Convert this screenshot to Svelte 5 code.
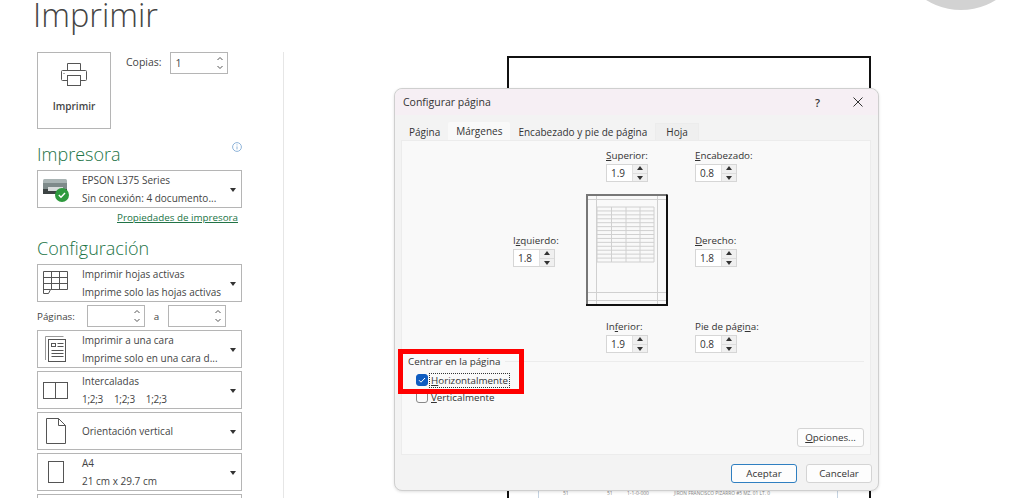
<script>
  const tableRows = Array.from({ length: 15 }, (_, i) => 208 + i * 55 / 14);
  const tableCols = [598, 612.5, 627, 641, 655];
</script>

{#snippet chevrons()}
  <svg class="arrows" width="8" height="16" viewBox="0 0 8 16" fill="none" stroke="#555"><path d="M1.500 5L4 2.500 6.500 5M1.500 11L4 13.500 6.500 11" /></svg>
{/snippet}

{#snippet updown()}
  <i class="updown"><b class="up"></b><b class="down"></b></i>
{/snippet}

<div class="screen">
  <div class="circle"></div>

  <div class="preview">
    <div class="tiny">
      <span class="t1">51</span><span class="t2">51</span><span class="t3">1-1-0-000</span><span class="t4">JIRON FRANCISCO PIZARRO #5 MZ. 01 LT. 0</span>
    </div>
  </div>

  <h1>Imprimir</h1>

  <div class="panel">
    <div class="print-row">
      <button class="print-btn">
        <svg width="28" height="27" viewBox="0 0 28 27" fill="none" stroke="#555" stroke-width="1">
          <path d="M7.5 9.500v-7h13v7" />
          <path d="M7.5 19.500h-5a1 1 0 0 1-1-1v-8a1 1 0 0 1 1-1h23a1 1 0 0 1 1 1v8a1 1 0 0 1-1 1h-5" />
          <rect x="7.5" y="14.500" width="13" height="10" />
          <path d="M3.500 12.500h1" />
        </svg>
        <span>Imprimir</span>
      </button>
      <span class="copies-label">Copias:</span>
      <div class="spin copies"><span>1</span>{@render chevrons()}</div>
    </div>

    <div class="head printer-head">
      <h2>Impresora</h2>
      <svg class="info" width="10" height="10" viewBox="0 0 10 10" fill="none" stroke="#8fb4d9"><circle cx="5" cy="5" r="4.400" /><path d="M5 4.400v3M5 2.400v1" /></svg>
    </div>

    <div class="drop">
      <div class="ico">
        <svg width="28" height="28" viewBox="0 0 28 28">
          <rect x="1" y="4" width="24" height="5" rx="1.500" fill="#a9b4b4" />
          <rect x="1" y="8" width="24" height="6" fill="#7e8a8a" />
          <rect x="1" y="14" width="24" height="5" fill="#3d4343" />
          <rect x="6" y="12" width="15" height="4" fill="#d8dcdc" />
          <circle cx="20" cy="20" r="7" fill="#2e9a3e" />
          <path d="M16.800 20l2.200 2.300 4-4.300" fill="none" stroke="#fff" stroke-width="1.400" />
        </svg>
      </div>
      <div class="txt"><div>EPSON L375 Series</div><div>Sin conexión: 4 documento...</div></div>
      <i class="caret"></i>
    </div>
    <a class="props">Propiedades de impresora</a>

    <div class="head config-head"><h2>Configuración</h2></div>

    <div class="drop">
      <div class="ico">
        <svg width="26" height="24" viewBox="0 0 26 24" fill="none" stroke="#555">
          <path d="M.5 .5h24v18h-17l-2 4h-5z" />
          <path d="M.5 6.500h24M.5 12.500h24M.5 18.500h7M8.500 .5v18M16.500 .5v18" />
        </svg>
      </div>
      <div class="txt"><div>Imprimir hojas activas</div><div>Imprime solo las hojas activas</div></div>
      <i class="caret"></i>
    </div>

    <div class="pages">
      <span>Páginas:</span>
      <div class="spin pg">{@render chevrons()}</div>
      <span class="a">a</span>
      <div class="spin pg">{@render chevrons()}</div>
    </div>

    <div class="drop">
      <div class="ico">
        <svg width="22" height="27" viewBox="0 0 22 27" fill="none" stroke="#555">
          <path d="M.5 24V.5h18" stroke="#999" />
          <rect x="3.500" y="3.500" width="17" height="22" />
          <rect x="6.500" y="7.500" width="4" height="3" />
          <path d="M12.500 7.500h6M12.500 10.500h6M6.500 14.500h12M6.500 17.500h12M6.500 20.500h12" />
        </svg>
      </div>
      <div class="txt"><div>Imprimir a una cara</div><div>Imprime solo en una cara d...</div></div>
      <i class="caret"></i>
    </div>

    <div class="drop">
      <div class="ico">
        <svg width="26" height="17" viewBox="0 0 26 17" fill="none" stroke="#555">
          <rect x=".5" y=".5" width="12" height="16" /><rect x="12.500" y=".5" width="12" height="16" />
        </svg>
      </div>
      <div class="txt"><div>Intercaladas</div><div class="coll"><span>1;2;3</span><span>1;2;3</span><span>1;2;3</span></div></div>
      <i class="caret"></i>
    </div>

    <div class="drop">
      <div class="ico">
        <svg width="20" height="26" viewBox="0 0 20 26" fill="none" stroke="#555">
          <path d="M.5 .5h12l7 7v18h-19zM12.500 .5v7h7" />
        </svg>
      </div>
      <div class="txt single"><div>Orientación vertical</div></div>
      <i class="caret"></i>
    </div>

    <div class="drop">
      <div class="ico">
        <svg width="16" height="22" viewBox="0 0 16 22" fill="none" stroke="#555"><rect x=".5" y=".5" width="15" height="21" /></svg>
      </div>
      <div class="txt"><div>A4</div><div>21 cm x 29.7 cm</div></div>
      <i class="caret"></i>
    </div>

    <div class="drop"></div>
  </div>

  <div class="dialog">
    <div class="titlebar">
      <span class="dlg-title">Configurar página</span>
      <span class="help">?</span>
      <svg class="close" width="10" height="10" viewBox="0 0 10 10" stroke="#333" fill="none"><path d="M.5 .5l9 9M9.500 .5l-9 9" /></svg>
    </div>

    <div class="tabs">
      <span class="tab">Página</span>
      <span class="tab active">Márgenes</span>
      <span class="tab">Encabezado y pie de página</span>
      <span class="tab hoja">Hoja</span>
    </div>

    <div class="pane">
      <div class="row top-row">
        <div class="field"><label><u>S</u>uperior:</label><div class="num"><span>1.9</span>{@render updown()}</div></div>
        <div class="field"><label><u>E</u>ncabezado:</label><div class="num"><span>0.8</span>{@render updown()}</div></div>
      </div>

      <div class="row mid-row">
        <div class="field side"><label>I<u>z</u>quierdo:</label><div class="num"><span>1.8</span>{@render updown()}</div></div>
        <svg class="sheet" width="82" height="112" viewBox="587 195 82 112" fill="none">
          <g stroke="#d0d0d0">
            <path d="M597.5 195v112M658.5 195v112M587 200.500h82M587 293.500h82M587 301.500h82" />
            {#each tableRows as y}<path d="M598 {y}H655" />{/each}
            {#each tableCols as x}<path d="M{x} 208V263" />{/each}
          </g>
          <path d="M588 306V196h80" stroke="#777" stroke-width="2" />
          <path d="M668 195.500V306H587" stroke="#111" stroke-width="2" />
        </svg>
        <div class="field side right"><label><u>D</u>erecho:</label><div class="num"><span>1.8</span>{@render updown()}</div></div>
      </div>

      <div class="row bot-row">
        <div class="field"><label>In<u>f</u>erior:</label><div class="num"><span>1.9</span>{@render updown()}</div></div>
        <div class="field"><label>Pie de pági<u>n</u>a:</label><div class="num"><span>0.8</span>{@render updown()}</div></div>
      </div>

      <div class="group">
        <span class="legend">Centrar en la página</span>
        <span class="sep"></span>
      </div>
      <div class="checks">
        <div class="check on">
          <span class="box"><svg width="12" height="12" viewBox="0 0 12 12" fill="none" stroke="#fff"><path d="M3 6.200l2 2 4-4.200" /></svg></span>
          <span class="focus"><u>H</u>orizontalmente</span>
        </div>
        <div class="check">
          <span class="box"></span>
          <span class="plain"><u>V</u>erticalmente</span>
        </div>
      </div>
      <div class="opts"><button class="btn opciones"><u>O</u>pciones...</button></div>
    </div>

    <div class="footer">
      <button class="btn primary">Aceptar</button>
      <button class="btn">Cancelar</button>
    </div>

    <div class="redbox"></div>
  </div>
</div>

<style>
  :global(body) { margin: 0; background: #fff; }
  * { box-sizing: border-box; }
  .screen {
    position: relative;
    width: 1024px;
    height: 498px;
    overflow: hidden;
    background: #fff;
    font-family: "Open Sans", "Noto Sans", sans-serif;
    color: #444;
  }
  .circle {
    position: absolute;
    left: 895px;
    top: -122px;
    width: 132px;
    height: 132px;
    border-radius: 50%;
    background: #d2d2d2;
  }
  .preview {
    position: absolute;
    left: 507px;
    top: 56px;
    width: 364px;
    height: 460px;
    border: 2px solid #111;
    background: #fff;
  }
  .tiny {
    position: absolute;
    left: 29px;
    right: 31px;
    top: 380px;
    height: 80px;
    border-left: 1px solid #c6d4e2;
    border-right: 1px solid #c6d4e2;
    font-size: 5px;
    color: #888;
  }
  .tiny span { position: absolute; top: 52px; white-space: nowrap; }
  .t1 { left: 24px; }
  .t2 { left: 68px; }
  .t3 { left: 88px; }
  .t4 { left: 135px; font-size: 4.800px; }

  h1 {
    margin: 0 0 0 33px;
    height: 52px;
    font-size: 32.500px;
    line-height: 30px;
    font-weight: 300;
    color: #444;
  }
  .panel {
    margin-left: 37px;
    width: 247px;
    height: 446px;
    border-right: 1px solid #e6e6e6;
    display: flex;
    flex-direction: column;
    gap: 3px;
  }
  .print-row { display: flex; align-items: flex-start; height: 77px; flex: none; }
  .print-btn {
    width: 74px;
    height: 77px;
    border: 1px solid #b5b5b5;
    background: #fff;
    padding: 8px 0 0;
    display: flex;
    flex-direction: column;
    align-items: center;
    font-family: inherit;
    font-size: 10px;
    font-weight: 600;
    color: #444;
  }
  .print-btn span { margin-top: 11px; }
  .copies-label { margin: 3px 8px 0 15px; font-size: 10.500px; line-height: 15px; }
  .spin {
    position: relative;
    height: 22px;
    border: 1px solid #b5b5b5;
    font-size: 10.500px;
    line-height: 20px;
    padding-left: 5px;
    background: #fff;
  }
  .copies { width: 58px; }
  .arrows { position: absolute; right: 3px; top: 2px; }

  .head { display: flex; justify-content: space-between; width: 205px; flex: none; }
  .printer-head { margin-top: 10px; height: 25px; }
  .config-head { margin-top: 8px; height: 25px; }
  h2 {
    margin: 0;
    font-size: 18px;
    line-height: 24px;
    font-weight: 300;
    color: #217346;
  }
  .info { margin: 0; }

  .drop {
    width: 205px;
    height: 38px;
    flex: none;
    border: 1px solid #b5b5b5;
    display: flex;
    align-items: center;
    background: #fff;
    position: relative;
  }
  .ico { width: 44px; flex: none; display: flex; justify-content: center; align-items: center; padding-right: 10px; padding-left: 2px; }
  .txt { font-size: 10px; line-height: 18px; white-space: nowrap; color: #444; }
  .coll { display: flex; gap: 11px; letter-spacing: -0.3px; }
  .caret {
    position: absolute;
    right: 5px;
    top: 17px;
    border: 3.500px solid transparent;
    border-top: 4px solid #333;
    border-bottom: 0;
  }
  .props {
    align-self: flex-start;
    width: 201px;
    margin-top: -1px;
    height: 15px;
    flex: none;
    text-align: right;
    font-size: 9.800px;
    line-height: 15px;
    color: #217346;
    text-decoration: underline;
    white-space: nowrap;
  }
  .pages {
    display: flex;
    align-items: center;
    width: 205px;
    height: 22px;
    flex: none;
    font-size: 9.800px;
  }
  .pages > span:first-child { width: 50px; }
  .pg { width: 58px; }
  .a { width: 23px; text-align: center; }

  /* dialog */
  .dialog {
    position: absolute;
    left: 394px;
    top: 88px;
    width: 485px;
    height: 403px;
    border: 1px solid #cfcfcf;
    border-radius: 8px;
    background: #f3f3f3;
    box-shadow: 0 1px 3px rgba(0,0,0,.12);
    font-size: 9.800px;
    color: #333;
    display: flex;
    flex-direction: column;
  }
  .titlebar {
    height: 26px;
    flex: none;
    background: #f6eff4;
    border-radius: 8px 8px 0 0;
    display: flex;
    align-items: center;
    padding: 0 15px 0 8px;
    font-size: 10.500px;
  }
  .dlg-title { flex: 1; }
  .help { margin-right: 33px; font-size: 11px; font-weight: 600; }
  .tabs { display: flex; height: 25px; flex: none; padding: 8px 0 0 6px; font-size: 10px; }
  .tab { padding: 0 8px; line-height: 18px; white-space: nowrap; }
  .tab.active {
    background: #f9f9f9;
    margin-top: -1px;
    height: 18px;
    line-height: 19px;
    border-radius: 2px 2px 0 0;
  }
  .tab.hoja { background: #efefef; border: 1px solid #ececec; border-bottom: 0; height: 17px; padding: 0 10px; line-height: 16px; }
  .pane {
    width: 470px;
    height: 315px;
    margin-left: 6px;
    flex: none;
    background: #f9f9f9;
    border: 1px solid #ececec;
    display: flex;
    flex-direction: column;
  }
  .row { display: flex; flex: none; }
  .top-row { padding: 8px 0 0 204px; height: 41px; gap: 47px; }
  .bot-row { padding: 0 0 0 204px; height: 34px; gap: 47px; margin-top: 13px; align-items: flex-start; }
  .mid-row { padding-left: 111px; height: 113px; margin-top: 12px; align-items: flex-start; }
  .field { width: 42px; }
  .side { margin-top: 40px; }
  .sheet { display: block; flex: none; margin-left: 31px; }
  .right { margin-left: 27px; }
  .field label { display: block; height: 15px; line-height: 13px; white-space: nowrap; }
  .num {
    position: relative;
    width: 42px;
    height: 18px;
    background: #fff;
    border: 1px solid #d6d6d6;
    line-height: 16px;
    padding-left: 4px;
    font-size: 10px;
  }
  .updown {
    position: absolute;
    right: 0;
    top: 0;
    bottom: 0;
    width: 15px;
    background: #f0f0f0;
    border-left: 1px solid #e0e0e0;
  }
  .updown b { position: absolute; left: 4px; border: 3px solid transparent; }
  .updown .up { top: 1px; border-top: 0; border-bottom: 4px solid #333; }
  .updown .down { bottom: 1px; border-bottom: 0; border-top: 4px solid #333; }
  .updown::after { content: ""; position: absolute; left: 0; right: 0; top: 7.500px; border-top: 1px solid #ddd; }

  .group { display: flex; align-items: center; height: 14px; flex: none; padding-left: 6px; padding-right: 6px; }
  .legend { white-space: nowrap; padding-right: 5px; }
  .sep { flex: 1; border-top: 1px solid #ececec; }
  .checks { padding: 6px 0 0 14px; display: flex; flex-direction: column; gap: 5px; flex: none; }
  .check { display: flex; align-items: center; height: 12px; gap: 2px; white-space: nowrap; }
  .box {
    width: 12px;
    height: 12px;
    border: 1px solid #888;
    border-radius: 3px;
    background: #fbfbfb;
    display: flex;
    flex: none;
  }
  .on .box { background: #0f5cc0; border-color: #0f5cc0; }
  .on .box svg { margin: -1px; }
  .focus { outline: 1px dotted #333; padding: 0 1px; line-height: 13px; }
  .plain { padding: 0 1px; }

  .opts { display: flex; justify-content: flex-end; padding: 25px 6px 0 0; flex: none; }
  .btn {
    height: 19px;
    width: 66px;
    border: 1px solid #d4d4d4;
    border-radius: 3px;
    background: #fdfdfd;
    font-family: inherit;
    font-size: 9.800px;
    color: #333;
    padding: 0;
  }
  .opciones { width: 67px; }
  .footer { display: flex; justify-content: flex-end; gap: 9px; padding: 9px 6px 0 0; }
  .primary { border-color: #2f7fc1; }

  .redbox {
    position: absolute;
    left: 3px;
    top: 260px;
    width: 126px;
    height: 45px;
    border: 5px solid #f00;
    pointer-events: none;
  }
</style>
